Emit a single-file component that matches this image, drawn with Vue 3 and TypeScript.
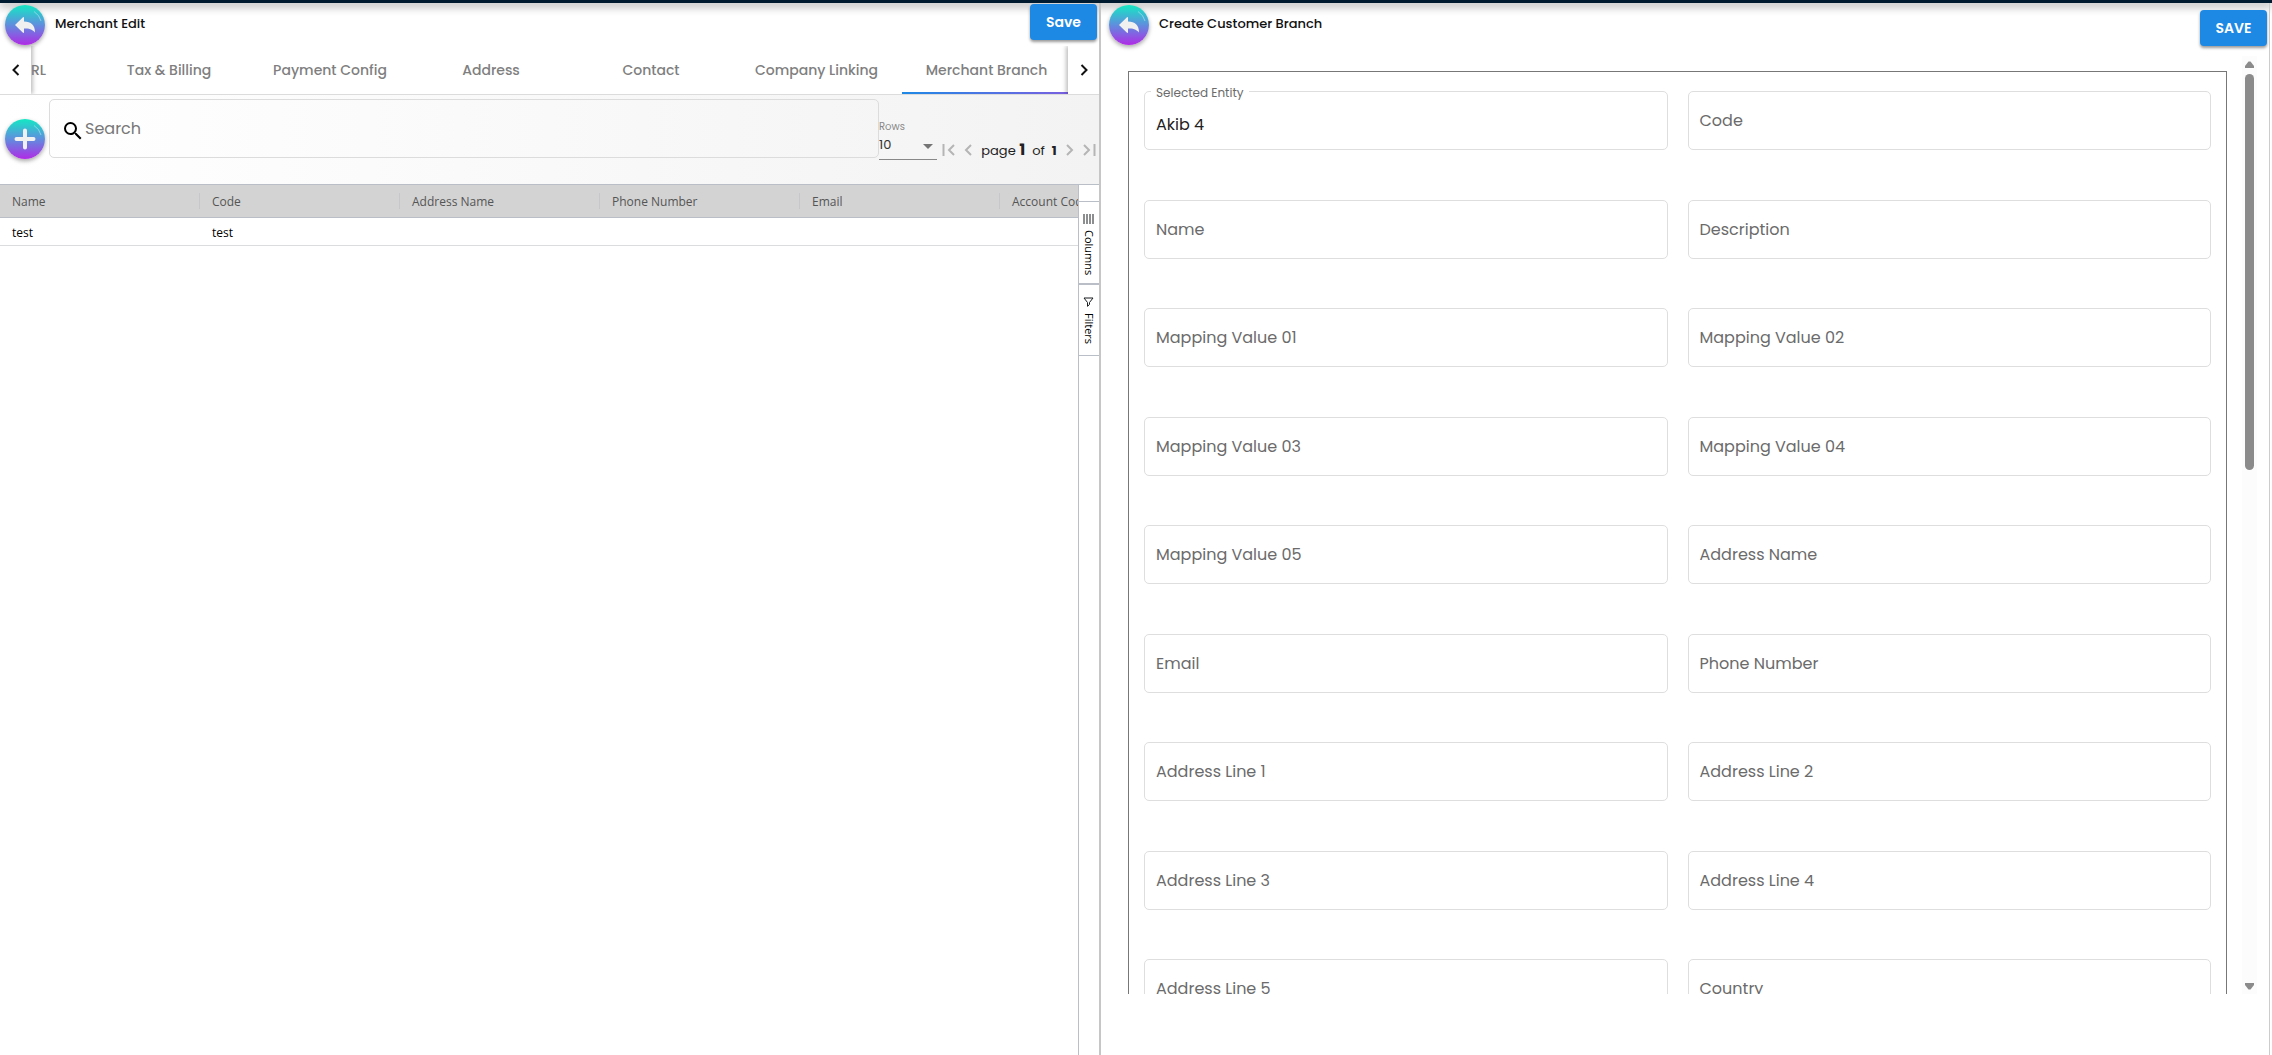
<script setup lang="ts">
import { ref } from 'vue'

interface Tab {
  name: string
  width: number
}

interface Field {
  id: string
  label: string
  value: string
}

const tabs: Tab[] = [
  { name: 'Tax & Billing', width: 160 },
  { name: 'Payment Config', width: 162 },
  { name: 'Address', width: 160 },
  { name: 'Contact', width: 160 },
  { name: 'Company Linking', width: 171 },
  { name: 'Merchant Branch', width: 169 },
]
const activeTab = ref('Merchant Branch')

const columns = ['Name', 'Code', 'Address Name', 'Phone Number', 'Email', 'Account Code']
const rows = [['test', 'test', '', '', '', '']]
const search = ref('')
const pageSize = ref('10')

const labels = [
  'Selected Entity', 'Code',
  'Name', 'Description',
  'Mapping Value 01', 'Mapping Value 02',
  'Mapping Value 03', 'Mapping Value 04',
  'Mapping Value 05', 'Address Name',
  'Email', 'Phone Number',
  'Address Line 1', 'Address Line 2',
  'Address Line 3', 'Address Line 4',
  'Address Line 5', 'Country',
]
const fields = ref<Field[]>(
  labels.map((label, i) => ({ id: `field-${i}`, label, value: i === 0 ? 'Akib 4' : '' })),
)
</script>

<template>
  <div class="app">
    <div class="topbar"></div>
    <main class="split">
      <section class="pane merchant">
        <header class="head">
          <button class="orb" type="button" aria-label="Back">
            <svg width="40" height="40" viewBox="0 0 40 40">
              <path class="shine" d="M29 6.500Q34.500 10 36 16" />
              <path class="glyph" d="M10 20 18 12.300Q19 11.500 19 13V16.500C26 16.500 30 20 30 27.500C27 24 24 23.500 19 23.500V27Q19 28.500 18 27.700Z" />
            </svg>
          </button>
          <h1>Merchant Edit</h1>
          <button class="save" type="button">Save</button>
        </header>

        <nav class="tabs">
          <button class="pager prev" type="button" aria-label="Previous tabs">
            <svg width="8" height="12" viewBox="0 0 8 12"><path d="M6.500 1 1.500 6l5 5" /></svg>
          </button>
          <div class="tab-strip">
            <button class="tab cut" type="button"><span>URL</span></button>
            <button
              v-for="tab in tabs"
              :key="tab.name"
              class="tab"
              :class="{ active: tab.name === activeTab }"
              :style="{ width: tab.width + 'px' }"
              type="button"
              @click="activeTab = tab.name"
            >{{ tab.name }}</button>
          </div>
          <button class="pager next" type="button" aria-label="Next tabs">
            <svg width="8" height="12" viewBox="0 0 8 12"><path d="m1.500 1 5 5-5 5" /></svg>
          </button>
        </nav>

        <div class="toolbar">
          <button class="orb" type="button" aria-label="Add">
            <svg width="40" height="40" viewBox="0 0 40 40">
              <path class="shine" d="M29 6.500Q34.500 10 36 16" />
              <path class="plus" d="M20 11.500v17M11.500 20h17" />
            </svg>
          </button>
          <div class="search">
            <svg width="24" height="24" viewBox="0 0 24 24">
              <path d="M15.500 14h-.79l-.28-.27A6.471 6.471 0 0 0 16 9.500 6.500 6.500 0 1 0 9.500 16c1.610 0 3.090-.59 4.230-1.570l.27.28v.79l5 4.990L20.490 19l-4.990-5zm-6 0C7.010 14 5 11.990 5 9.500S7.010 5 9.500 5 14 7.010 14 9.500 11.990 14 9.500 14z" />
            </svg>
            <input v-model="search" type="text" placeholder="Search" aria-label="Search" />
          </div>
          <div class="page-size">
            <label for="page-size">Rows</label>
            <select id="page-size" v-model="pageSize">
              <option>10</option>
              <option>20</option>
              <option>50</option>
            </select>
            <svg class="caret" width="10" height="5" viewBox="0 0 10 5"><path d="M0 0h10L5 5z" /></svg>
          </div>
          <div class="paging">
            <button type="button" aria-label="First page">
              <svg width="13" height="12" viewBox="0 0 13 12"><path d="M1.500 0v12M12 1 7 6l5 5" /></svg>
            </button>
            <button type="button" aria-label="Previous page">
              <svg width="8" height="12" viewBox="0 0 8 12"><path d="M7 1 2 6l5 5" /></svg>
            </button>
            <span class="page-text"><span>page <b class="current">1</b></span><span>of</span><b>1</b></span>
            <button type="button" aria-label="Next page">
              <svg width="8" height="12" viewBox="0 0 8 12"><path d="m1 1 5 5-5 5" /></svg>
            </button>
            <button type="button" aria-label="Last page">
              <svg width="13" height="12" viewBox="0 0 13 12"><path d="M11.500 0v12M1 1l5 5-5 5" /></svg>
            </button>
          </div>
        </div>

        <div class="grid-wrap">
          <div class="grid-body">
            <table>
              <thead>
                <tr>
                  <th v-for="column in columns" :key="column">{{ column }}</th>
                </tr>
              </thead>
              <tbody>
                <tr v-for="(row, r) in rows" :key="r">
                  <td v-for="(cell, c) in row" :key="c">{{ cell }}</td>
                </tr>
              </tbody>
            </table>
          </div>
          <aside class="side">
            <button class="side-columns" type="button">
              <svg width="11" height="10" viewBox="0 0 11 10"><path d="M1 0v10M4 0v10M7 0v10M10 0v10" /></svg>
              <span>Columns</span>
            </button>
            <button class="side-filters" type="button">
              <svg width="11" height="10" viewBox="0 0 11 10"><path d="M1 1h9L6.500 5.500V7.500L4.500 9.300V5.500Z" /></svg>
              <span>Filters</span>
            </button>
          </aside>
        </div>
      </section>

      <section class="pane branch">
        <header class="head">
          <button class="orb" type="button" aria-label="Back">
            <svg width="40" height="40" viewBox="0 0 40 40">
              <path class="shine" d="M29 6.500Q34.500 10 36 16" />
              <path class="glyph" d="M10 20 18 12.300Q19 11.500 19 13V16.500C26 16.500 30 20 30 27.500C27 24 24 23.500 19 23.500V27Q19 28.500 18 27.700Z" />
            </svg>
          </button>
          <h1>Create Customer Branch</h1>
          <button class="save upper" type="button">SAVE</button>
        </header>
        <div class="scroller">
          <form class="sheet" @submit.prevent>
            <div
              v-for="field in fields"
              :key="field.id"
              class="field"
              :class="{ filled: field.value !== '' }"
            >
              <input :id="field.id" v-model="field.value" type="text" />
              <label :for="field.id">{{ field.label }}</label>
            </div>
          </form>
          <div class="track">
            <svg width="9" height="7" viewBox="0 0 9 7"><path d="M3.500.5h2L9 5v2H0V5z" /></svg>
            <div class="thumb"></div>
            <svg width="9" height="7" viewBox="0 0 9 7"><path d="M0 0h9v2L5.500 6.500h-2L0 2z" /></svg>
          </div>
        </div>
      </section>
    </main>
  </div>
</template>

<style>
body {
  margin: 0;
  background: #fff;
}
</style>

<style scoped>
.app {
  display: flex;
  flex-direction: column;
  height: 100vh;
  overflow: hidden;
  font-family: Poppins, Inter, sans-serif;
  color: #212121;
}

.app *,
.app *::before,
.app *::after {
  box-sizing: border-box;
}

button {
  margin: 0;
  padding: 0;
  border: 0;
  background: none;
  font-family: inherit;
  color: inherit;
  cursor: pointer;
}

input,
select {
  font-family: inherit;
}

.topbar {
  flex: none;
  height: 3px;
  background: #001a30;
  box-shadow: 0 2px 10px 1px rgba(0, 0, 0, 0.4);
}

.split {
  flex: 1;
  min-height: 0;
  display: grid;
  grid-template-columns: 1101fr 1169fr;
  padding-right: 2px;
}

.pane {
  display: flex;
  flex-direction: column;
  min-width: 0;
  min-height: 0;
}

.merchant {
  border-right: 2px solid #c6c6c6;
}

.branch {
  border-right: 1px solid #ccc;
}

.head {
  display: flex;
  align-items: flex-start;
  height: 43px;
  padding: 2px 2px 0 5px;
}

.branch .head {
  height: 53px;
  padding-left: 8px;
}

.orb {
  flex: none;
  width: 40px;
  height: 40px;
  border-radius: 50%;
  background: linear-gradient(#14e8c4, #5f8ede 50%, #b02be6);
  box-shadow: 0 2px 4px rgba(0, 0, 0, 0.35);
}

.orb svg {
  display: block;
}

.glyph {
  fill: #f0f0f0;
}

.plus {
  fill: none;
  stroke: #f0f0f0;
  stroke-width: 4;
  stroke-linecap: round;
}

.shine {
  fill: none;
  stroke: rgba(255, 255, 255, 0.4);
}

h1 {
  flex: 1;
  margin: 0 0 0 10px;
  color: #111;
  font-size: 13px;
  line-height: 38px;
  font-weight: 500;
}

.save {
  flex: none;
  width: 67px;
  height: 36px;
  margin-top: -1px;
  border-radius: 4px;
  background: #1e88e5;
  color: #fff;
  font-size: 14px;
  font-weight: 600;
  box-shadow: 0 2px 3px rgba(0, 0, 0, 0.4);
}

.save.upper {
  margin-top: 5px;
}

.tabs {
  display: flex;
  flex: none;
  height: 49px;
  border-bottom: 1px solid #dcdcdc;
}

.pager {
  flex: none;
  display: flex;
  align-items: center;
  justify-content: center;
  width: 31px;
  height: 48px;
}

.pager svg {
  fill: none;
  stroke: #111;
  stroke-width: 2;
}

.prev {
  box-shadow: 2px 0 4px rgba(0, 0, 0, 0.25);
  clip-path: inset(0 -8px 0 0);
}

.next {
  box-shadow: -2px 0 4px rgba(0, 0, 0, 0.25);
  clip-path: inset(0 0 0 -8px);
}

.tab-strip {
  flex: 1;
  min-width: 0;
  display: flex;
  overflow: hidden;
}

.tab {
  position: relative;
  flex: none;
  height: 48px;
  color: #7f7f7f;
  font-size: 14px;
  font-weight: 500;
  white-space: nowrap;
}

.tab.cut {
  display: flex;
  align-items: center;
  justify-content: flex-end;
  width: 58px;
  padding-right: 43px;
}

.tab.active::after {
  content: '';
  position: absolute;
  left: 0;
  right: 0;
  bottom: 0;
  height: 2px;
  background: linear-gradient(90deg, #1e88e5, #7b5fe0);
}

.toolbar {
  flex: none;
  display: flex;
  align-items: flex-start;
  height: 89px;
  background: linear-gradient(90deg, #fff, #f3f3f3);
}

.toolbar .orb {
  margin: 24px 4px 0 5px;
}

.search {
  flex: 1;
  min-width: 0;
  display: flex;
  align-items: center;
  height: 59px;
  margin-top: 4px;
  padding-left: 11px;
  border: 1px solid #dcdcdc;
  border-radius: 5px;
}

.search svg {
  flex: none;
  margin-top: 4px;
}

.search input {
  flex: 1;
  min-width: 0;
  height: 40px;
  padding: 0;
  border: 0;
  outline: 0;
  background: none;
  font-size: 16px;
}

.search input::placeholder {
  color: #777;
}

.page-size {
  position: relative;
  flex: none;
  display: flex;
  flex-direction: column;
  width: 58px;
  margin-top: 24px;
}

.page-size label {
  font-size: 10px;
  line-height: 16px;
  color: #888;
}

.page-size select {
  appearance: none;
  height: 25px;
  padding: 0 0 6px;
  border: 0;
  border-bottom: 1px solid #888;
  border-radius: 0;
  background: none;
  color: #333;
  font-size: 13px;
}

.caret {
  position: absolute;
  right: 4px;
  bottom: 11px;
  fill: #757575;
  pointer-events: none;
}

.paging {
  flex: none;
  display: flex;
  align-items: center;
  justify-content: space-between;
  width: 162px;
  height: 24px;
  margin-top: 43px;
  padding: 0 3px 0 5px;
}

.paging svg {
  display: block;
  fill: none;
  stroke: #b5b5b5;
  stroke-width: 2;
}

.page-text {
  display: flex;
  align-items: baseline;
  gap: 7px;
  font-size: 13px;
  line-height: 24px;
  white-space: nowrap;
}

.page-text .current {
  font-size: 16px;
}

.grid-wrap {
  flex: 1;
  min-height: 0;
  display: flex;
  border-top: 1px solid #babfc7;
  font-family: 'Segoe UI', 'Open Sans', sans-serif;
}

.grid-body {
  flex: 1;
  min-width: 0;
  overflow: hidden;
}

table {
  width: 1200px;
  table-layout: fixed;
  border-collapse: separate;
  border-spacing: 0;
  font-size: 12px;
}

th {
  position: relative;
  height: 33px;
  padding: 0 12px;
  border-bottom: 1px solid #babfc7;
  background: #d3d3d3;
  color: #555;
  font-weight: 500;
  text-align: left;
}

th::after {
  content: '';
  position: absolute;
  right: 0;
  top: 8px;
  width: 1px;
  height: 16px;
  background: #c5c7ca;
}

td {
  height: 28px;
  padding: 2px 12px 0;
  border-bottom: 1px solid #dadcde;
  color: #000;
}

.side {
  flex: none;
  display: flex;
  flex-direction: column;
  width: 21px;
  padding-top: 16px;
  border-left: 1px solid #babfc7;
}

.side button {
  display: flex;
  flex-direction: column;
  align-items: center;
  gap: 6px;
  width: 20px;
  padding: 12px 1px 0 0;
  border-top: 1px solid #babfc7;
  border-bottom: 1px solid #babfc7;
  color: #000;
  font-size: 11px;
  line-height: 18px;
}

.side span {
  writing-mode: vertical-rl;
}

.side svg {
  flex: none;
  fill: none;
  stroke: #181d1f;
}

.side-columns {
  height: 83px;
}

.side-filters {
  height: 72px;
}

.scroller {
  flex: 1;
  min-height: 0;
  display: flex;
  align-items: flex-start;
  gap: 15px;
  margin-bottom: 61px;
  padding: 0 12px 0 27px;
  overflow: hidden;
}

.sheet {
  flex: 1;
  min-width: 0;
  display: grid;
  grid-template-columns: 1fr 1fr;
  grid-auto-rows: 109px 108px;
  column-gap: 20px;
  margin-top: 15px;
  padding: 19px 15px;
  border: 1px solid #777;
}

.field {
  position: relative;
  height: 59px;
}

.field input {
  display: block;
  width: 100%;
  height: 59px;
  padding: 8px 11px 0;
  border: 1px solid #dedede;
  border-radius: 5px;
  outline: 0;
  background: #fff;
  color: #212121;
  font-size: 16px;
}

.field label {
  position: absolute;
  left: 12px;
  top: 18px;
  color: #6b6b6b;
  font-size: 16px;
  line-height: 24px;
  pointer-events: none;
}

.field.filled label {
  left: 7px;
  top: -6px;
  padding: 0 5px;
  background: #fff;
  font-size: 12px;
  line-height: 16px;
}

.track {
  flex: none;
  align-self: stretch;
  display: flex;
  flex-direction: column;
  align-items: center;
  width: 15px;
  padding: 5px 0 4px;
  background: #fcfcfc;
}

.track svg {
  flex: none;
  fill: #8b8b8b;
}

.thumb {
  flex: none;
  width: 9px;
  height: 396px;
  margin: 6px 0 auto;
  border-radius: 5px;
  background: #8b8b8b;
}
</style>
